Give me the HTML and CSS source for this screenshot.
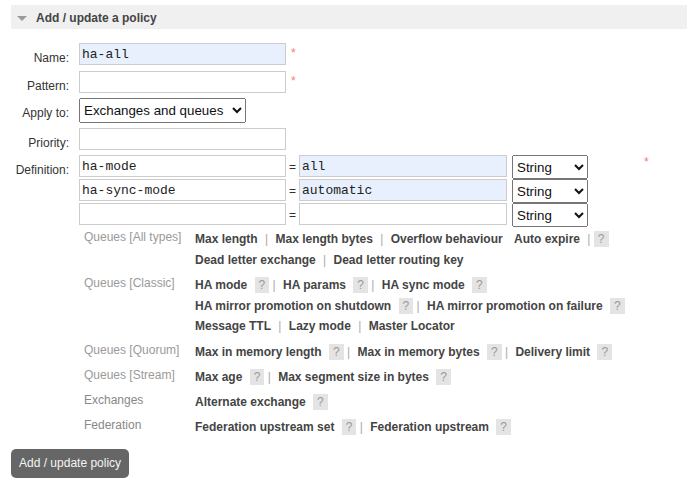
FILE: index.html
```html
<!DOCTYPE html>
<html>
<head>
<meta charset="utf-8">
<title>Add / update a policy</title>
<link rel="stylesheet" href="styles.css">
</head>
<body>
<div class="page">
  <div class="section-head"><span class="tri"></span><h2>Add / update a policy</h2></div>

  <div class="form">
    <div class="row r-name">
      <div class="lbl">Name:</div>
      <div class="ctl"><input class="txt filled" type="text" value="ha-all"><span class="req">*</span></div>
    </div>
    <div class="row r-pattern">
      <div class="lbl">Pattern:</div>
      <div class="ctl"><input class="txt" type="text" value=""><span class="req">*</span></div>
    </div>
    <div class="row r-apply">
      <div class="lbl">Apply to:</div>
      <div class="ctl">
        <select class="sel sel-apply">
          <option>Exchanges and queues</option>
          <option>Exchanges</option>
          <option>Queues</option>
        </select>
      </div>
    </div>
    <div class="row r-priority">
      <div class="lbl">Priority:</div>
      <div class="ctl"><input class="txt" type="text" value=""></div>
    </div>
    <div class="row r-def">
      <div class="lbl">Definition:</div>
      <div class="ctl">
        <div class="defs">
          <div class="def-row">
            <input class="txt" type="text" value="ha-mode"><span class="eq">=</span><input class="txt val filled" type="text" value="all"><select class="sel sel-type"><option>String</option><option>Number</option><option>Boolean</option><option>List</option></select>
          </div>
          <div class="def-row">
            <input class="txt" type="text" value="ha-sync-mode"><span class="eq">=</span><input class="txt val filled" type="text" value="automatic"><select class="sel sel-type"><option>String</option><option>Number</option><option>Boolean</option><option>List</option></select>
          </div>
          <div class="def-row">
            <input class="txt" type="text" value=""><span class="eq">=</span><input class="txt val" type="text" value=""><select class="sel sel-type"><option>String</option><option>Number</option><option>Boolean</option><option>List</option></select>
          </div>
        </div>
        <span class="req req-def">*</span>
      </div>
    </div>

    <div class="help">
      <div class="cat">Queues [All types]</div>
      <div class="links">
        <div class="line"><span class="arg">Max length</span> | <span class="arg">Max length bytes</span> | <span class="arg">Overflow behaviour</span> <span class="arg">Auto expire</span> | <span class="q">?</span></div>
        <div class="line"><span class="arg">Dead letter exchange</span> | <span class="arg">Dead letter routing key</span></div>
      </div>

      <div class="cat">Queues [Classic]</div>
      <div class="links">
        <div class="line"><span class="arg">HA mode</span> <span class="q">?</span> | <span class="arg">HA params</span> <span class="q">?</span> | <span class="arg">HA sync mode</span> <span class="q">?</span></div>
        <div class="line"><span class="arg">HA mirror promotion on shutdown</span> <span class="q">?</span> | <span class="arg">HA mirror promotion on failure</span> <span class="q">?</span></div>
        <div class="line"><span class="arg">Message TTL</span> | <span class="arg">Lazy mode</span> | <span class="arg">Master Locator</span></div>
      </div>

      <div class="cat">Queues [Quorum]</div>
      <div class="links">
        <div class="line"><span class="arg">Max in memory length</span> <span class="q">?</span> | <span class="arg">Max in memory bytes</span> <span class="q">?</span> | <span class="arg">Delivery limit</span> <span class="q">?</span></div>
      </div>

      <div class="cat">Queues [Stream]</div>
      <div class="links">
        <div class="line"><span class="arg">Max age</span> <span class="q">?</span> | <span class="arg">Max segment size in bytes</span> <span class="q">?</span></div>
      </div>

      <div class="cat cat-dark">Exchanges</div>
      <div class="links">
        <div class="line"><span class="arg">Alternate exchange</span> <span class="q">?</span></div>
      </div>

      <div class="cat cat-dark">Federation</div>
      <div class="links">
        <div class="line"><span class="arg">Federation upstream set</span> <span class="q">?</span> | <span class="arg">Federation upstream</span> <span class="q">?</span></div>
      </div>
    </div>
  </div>

  <button class="btn" type="button">Add / update policy</button>
</div>
</body>
</html>
```

FILE: styles.css
```css
html, body {
  margin: 0;
  padding: 0;
  background: #fff;
}

body {
  font-family: "Liberation Sans", Arial, sans-serif;
  font-size: 12px;
  color: #333;
}

.page {
  padding: 5px 0 0 11px;
}

/* section header */
.section-head {
  display: flex;
  align-items: flex-start;
  height: 24px;
  background: #f0f0f0;
}

.tri {
  width: 0;
  height: 0;
  border-left: 5px solid transparent;
  border-right: 5px solid transparent;
  border-top: 5px solid #9a9a9a;
  margin: 11px 9px 0 6px;
}

.section-head h2 {
  margin: 0;
  padding-top: 6px;
  font-size: 12px;
  line-height: 14px;
  font-weight: bold;
  color: #444;
}

/* form */
.form {
  margin-top: 14px;
}

.row {
  display: flex;
  align-items: flex-start;
}

.r-pattern { margin-top: 6px; }
.r-apply { margin-top: 5px; }
.r-priority { margin-top: 5px; }
.r-def { margin-top: 5px; }

.lbl {
  width: 58px;
  text-align: right;
  padding-top: 8px;
  line-height: 14px;
  color: #333;
}

.ctl {
  margin-left: 10px;
  display: flex;
  align-items: flex-start;
}

.txt {
  box-sizing: border-box;
  width: 207px;
  height: 22px;
  margin: 0;
  padding: 1px 2px;
  border: 1px solid #ccc;
  border-radius: 0;
  background: #fff;
  font-family: "Liberation Mono", "DejaVu Sans Mono", monospace;
  font-size: 13px;
  color: #222;
  outline: none;
}

.txt.filled {
  background: #e8f0fe;
}

.txt.val {
  width: 208px;
}

.req {
  margin-left: 5px;
  padding-top: 3px;
  line-height: 14px;
  font-size: 12px;
  color: #f47c7c;
}

.req-def {
  margin-left: 56px;
  padding-top: 0;
}

.sel {
  box-sizing: border-box;
  margin: 0;
  font-family: "Liberation Sans", Arial, sans-serif;
  font-size: 13.333px;
  color: #111;
}

.sel-apply {
  width: 167px;
  height: 25px;
}

.defs {
  display: flex;
  flex-direction: column;
}

.def-row {
  display: flex;
  align-items: flex-start;
  height: 24px;
}

.eq {
  width: 13px;
  text-align: center;
  padding-top: 2px;
  line-height: 20px;
  font-size: 12px;
  color: #333;
}

.sel-type {
  width: 76px;
  height: 24px;
  margin-left: 5px;
}

/* help table */
.help {
  margin: 2px 0 0 73px;
  display: grid;
  grid-template-columns: 107px auto;
  row-gap: 4.5px;
}

.cat {
  padding-top: 1px;
  line-height: 14px;
  color: #9a9a9a;
}

.cat-dark {
  color: #888;
}

.links {
  color: #aaa;
}

.line {
  line-height: 20.7px;
  white-space: nowrap;
}

.arg {
  padding: 0 4px;
  font-weight: bold;
  color: #444;
}

.q {
  display: inline-block;
  padding: 1px 4px;
  line-height: 14px;
  background: #e4e4e4;
  color: #999;
}

/* button */
.btn {
  display: block;
  margin-top: 11px;
  height: 29px;
  padding: 0 8px;
  border: none;
  border-radius: 5px;
  background: #666;
  color: #f4f4f4;
  font-family: "Liberation Sans", Arial, sans-serif;
  font-size: 12px;
}
```
